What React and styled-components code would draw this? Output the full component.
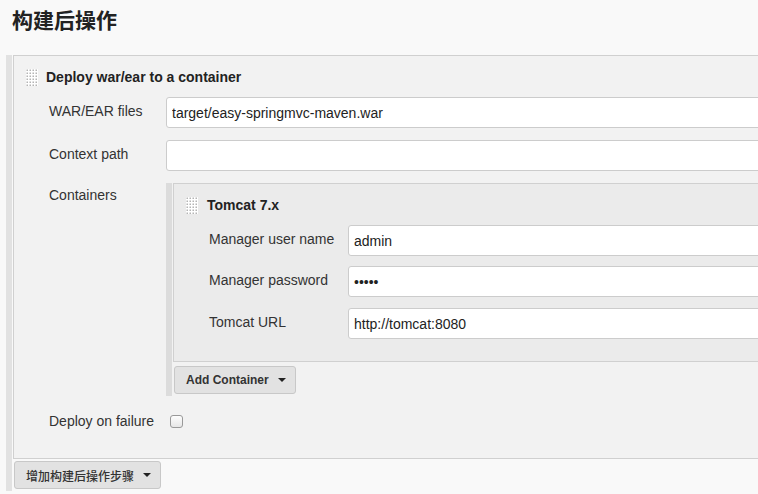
import React from "react";
import styled, { createGlobalStyle } from "styled-components";

const GlobalStyle = createGlobalStyle`
  html, body {
    margin: 0;
    padding: 0;
    background: #f9f9f9;
    overflow: hidden;
  }
  body {
    font-family: "Liberation Sans", Arial, "Noto Sans CJK SC", sans-serif;
    color: #333;
  }
`;

const Page = styled.div`
  width: 1000px;
  padding: 5px 0 0 6px;
`;

const Title = styled.h1`
  margin: 0 0 22px 6px;
  font-family: "Noto Sans CJK SC", "Liberation Sans", sans-serif;
  font-size: 21px;
  line-height: 28px;
  font-weight: 700;
  color: #222;
`;

const Section = styled.div`
  border-left: 6px solid ${(p) => (p.inner ? "#dcdcdc" : "#e2e2e2")};
  padding-left: 1px;
  padding-bottom: 2px;
`;

const Panel = styled.div`
  background: ${(p) => (p.inner ? "#ebebeb" : "#f2f2f2")};
  border: 1px solid #d0d0d0;
  border-right: none;
  padding: ${(p) => (p.inner ? "8px 0 22px 0" : "7px 0 24px 0")};
`;

const Header = styled.div`
  display: flex;
  align-items: center;
  gap: ${(p) => (p.inner ? "9px" : "8px")};
  height: ${(p) => (p.inner ? "26px" : "28px")};
  margin-left: 12px;
  margin-bottom: ${(p) => (p.inner ? "7px" : "6px")};
  font-weight: 700;
  font-size: 14px;
  color: #222;
`;

const Row = styled.div`
  display: flex;
  align-items: flex-start;
  margin-bottom: ${(p) => p.gap ?? 12}px;
  &:last-child {
    margin-bottom: 0;
  }
`;

const Label = styled.div`
  flex: 0 0 ${(p) => p.w}px;
  padding-left: 35px;
  box-sizing: border-box;
  font-size: 14px;
  line-height: 18px;
  padding-top: ${(p) => p.top ?? 5}px;
  color: #333;
`;

const Field = styled.div`
  flex: 1;
  min-width: 0;
`;

const Input = styled.input`
  display: block;
  width: 100%;
  height: 31px;
  box-sizing: border-box;
  border: 1px solid #ccc;
  border-radius: 3px;
  background: #fff;
  padding: 0 5px;
  font-family: "Liberation Sans", Arial, sans-serif;
  font-size: 14px;
  color: #222;
  outline: none;
`;

const Button = styled.button`
  display: inline-flex;
  align-items: center;
  gap: 9px;
  height: 28px;
  padding: 0 9px 0 11px;
  border: 1px solid #c8c8c8;
  border-radius: 3px;
  background: #e2e2e2;
  font-family: "Liberation Sans", Arial, "Noto Sans CJK SC", sans-serif;
  font-size: 12px;
  font-weight: ${(p) => (p.cjk ? 500 : 700)};
  color: #333;
  margin-top: ${(p) => p.mt ?? 0}px;
  margin-left: ${(p) => p.ml ?? 0}px;
`;

const Caret = styled.span`
  width: 0;
  height: 0;
  border-left: 4px solid transparent;
  border-right: 4px solid transparent;
  border-top: 4px solid #222;
`;

const CheckRow = styled.div`
  display: flex;
  align-items: center;
  height: 26px;
  margin-top: 12px;
`;

const CheckLabel = styled.div`
  padding-left: 35px;
  padding-right: 12px;
  font-size: 14px;
  line-height: 18px;
  color: #333;
`;

const Checkbox = styled.span`
  display: inline-block;
  width: 11px;
  height: 11px;
  margin-left: 4px;
  border: 1px solid #999;
  border-radius: 3px;
  background: linear-gradient(#fdfdfd, #e6e6e6);
`;

function Handle() {
  const dots = [];
  for (let r = 0; r < 6; r++) {
    for (let c = 0; c < 4; c++) {
      dots.push(<rect key={r + "-" + c} x={c * 3 + 0.5} y={r * 3 + 0.5} width="1.5" height="1.5" fill="#b4b4b4" />);
    }
  }
  return (
    <svg width="12" height="17" viewBox="0 0 12 17">
      <rect width="12" height="17" fill="#fff" />
      {dots}
    </svg>
  );
}

export default function App() {
  return (
    <Page>
      <GlobalStyle />
      <Title>构建后操作</Title>
      <Section>
        <Panel>
          <Header>
            <Handle />
            Deploy war/ear to a container
          </Header>
          <Row>
            <Label w={152}>WAR/EAR files</Label>
            <Field>
              <Input defaultValue="target/easy-springmvc-maven.war" />
            </Field>
          </Row>
          <Row>
            <Label w={152}>Context path</Label>
            <Field>
              <Input defaultValue="" />
            </Field>
          </Row>
          <Row gap={0}>
            <Label w={152} top={3}>Containers</Label>
            <Field>
              <Section inner>
                <Panel inner>
                  <Header inner>
                    <Handle />
                    Tomcat 7.x
                  </Header>
                  <Row gap={10}>
                    <Label w={174}>Manager user name</Label>
                    <Field>
                      <Input defaultValue="admin" />
                    </Field>
                  </Row>
                  <Row gap={11}>
                    <Label w={174}>Manager password</Label>
                    <Field>
                      <Input type="password" defaultValue="admin" />
                    </Field>
                  </Row>
                  <Row>
                    <Label w={174}>Tomcat URL</Label>
                    <Field>
                      <Input defaultValue="http://tomcat:8080" />
                    </Field>
                  </Row>
                </Panel>
                <Button mt={4} ml={1}>
                  Add Container
                  <Caret />
                </Button>
              </Section>
            </Field>
          </Row>
          <CheckRow>
            <CheckLabel>Deploy on failure</CheckLabel>
            <Checkbox />
          </CheckRow>
        </Panel>
        <Button cjk mt={2} ml={1}>
          增加构建后操作步骤
          <Caret />
        </Button>
      </Section>
    </Page>
  );
}
